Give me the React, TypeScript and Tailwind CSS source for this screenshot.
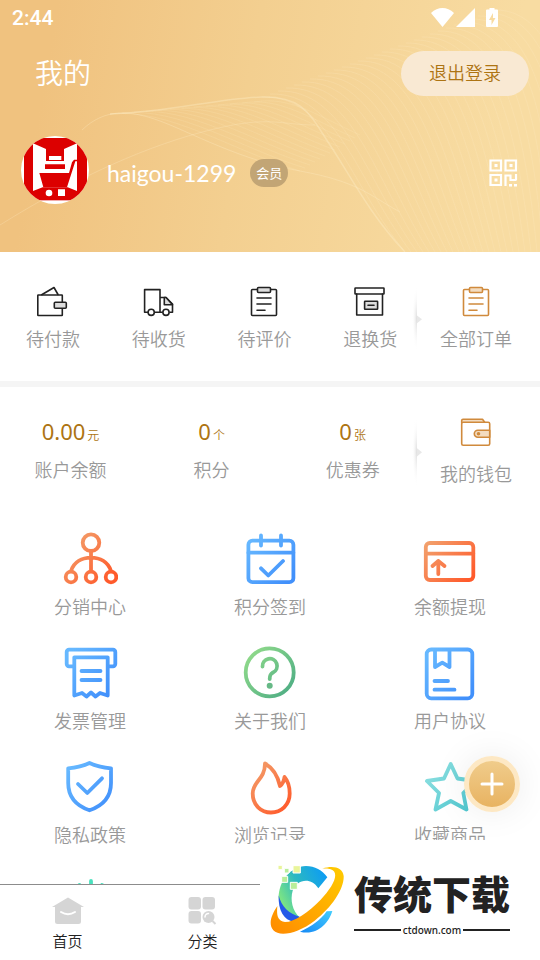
import type { ReactNode } from "react";

const CJK = "font-['Noto_Sans','Noto_Sans_CJK_SC',sans-serif]";

function fanPath(i: number) {
  return `M${262 + i * 8} ${97 - i * 3}C${330 + i * 8} ${95 - i * 3} ${350 + i * 8} ${185 - i * 2} ${405 + i * 6} 252`;
}

function meshPath(i: number) {
  return `M${110 + i * 12} ${114 - i}C${170 + i * 10} ${108 - i} ${230 + i * 7} ${150 - i * 3} ${300 + i * 5} ${171 - i * 3}`;
}

function HeaderWaves() {
  return (
    <svg
      className="absolute inset-0 h-full w-full"
      viewBox="0 0 540 252"
      preserveAspectRatio="none"
      fill="none"
      stroke="#fff0cc"
      aria-hidden="true"
    >
      <g strokeOpacity="0.18">
        {Array.from({ length: 30 }, (_, i) => (
          <path key={i} d={fanPath(i)} />
        ))}
      </g>
      <g strokeOpacity="0.15">
        {Array.from({ length: 13 }, (_, i) => (
          <path key={i} d={meshPath(i)} />
        ))}
      </g>
      <path d="M82 130C105 108 130 110 160 121S240 160 300 171S370 196 400 212" strokeOpacity="0.28" />
      <path d="M110 114C170 112 220 98 262 97S310 115 330 145S370 215 405 252" strokeOpacity="0.35" strokeWidth="1.500" />
      <path d="M0 225C80 175 150 145 210 130S280 125 315 125" strokeOpacity="0.25" />
    </svg>
  );
}

function StatusIcons() {
  return (
    <svg width="68" height="20" viewBox="0 0 68 20" fill="#fff" aria-hidden="true">
      <path d="M0 5C7-1.6 16-1.6 23 5L11.500 19Z" />
      <path d="M44 0V19H25Z" />
      <path
        fillRule="evenodd"
        d="M58.500 0h5v1.500H66a1 1 0 0 1 1 1V18a1 1 0 0 1-1 1H56a1 1 0 0 1-1-1V2.500a1 1 0 0 1 1-1h2.500ZM62 5l-4 7h2.500v5l4-7H62Z"
      />
    </svg>
  );
}

function Avatar() {
  return (
    <svg className="h-[68px] w-[68px] self-start rounded-full bg-white" viewBox="63 33 204 204" role="img" aria-label="头像">
      <rect x="72" y="39" width="189" height="187" fill="#dc0000" />
      <path fill="#fff" d="M99 55L138 72V108H192V72L231 55V198L203 187H128L99 198Z" />
      <path fill="#dc0000" d="M135 118H195V132H135ZM118 144H207L216 112L222 104H232V109H226L201 187L130 187Z" />
      <path fill="#fff" d="M147 93H184V105H147ZM174 193H195V213H174Z" />
      <circle cx="147" cy="204" r="10" fill="#fff" />
    </svg>
  );
}

function QrIcon() {
  return (
    <svg width="29" height="28" viewBox="0 0 29 28" fill="none" stroke="#fff" strokeWidth="2.200" aria-hidden="true">
      <path d="M1.500 1.500h10.500v10H1.500ZM16.500 1.500h10.500v10H16.500ZM1.500 16h10.500v10H1.500Z" />
      <path d="M16.500 27V16.500h5v4.500h6M27 15v6" />
      <path fill="#fff" stroke="none" d="M5.500 5h3v3h-3ZM20.500 5h3v3h-3ZM5.500 19.500h3v3h-3ZM20 25h3v2.500h-3ZM25 25h3v2.500h-3Z" />
    </svg>
  );
}

function LineIcon({ color = "#222", children }: { color?: string; children: ReactNode }) {
  return (
    <svg
      width="32"
      height="32"
      viewBox="0 0 32 32"
      fill="none"
      stroke={color}
      strokeWidth="1.600"
      strokeLinecap="round"
      strokeLinejoin="round"
      aria-hidden="true"
    >
      {children}
    </svg>
  );
}

function Clipboard({ color, tint }: { color: string; tint: string }) {
  return (
    <LineIcon color={color}>
      <rect x="3.500" y="3.500" width="25" height="26" rx="1" />
      <rect x="9.500" y="1.500" width="13" height="5" rx="1" fill={tint} />
      <path d="M9 12H23M9 18H23M9 24.300H17" />
    </LineIcon>
  );
}

const orders = [
  {
    label: "待付款",
    icon: (
      <LineIcon>
        <path d="M4.700 8.700L17 1.500L21 8.500" />
        <rect x="0.800" y="9" width="24.500" height="20.500" rx="0.500" />
        <rect x="17.300" y="16.300" width="12" height="6" rx="1" fill="#ddd" />
      </LineIcon>
    ),
  },
  {
    label: "待收货",
    icon: (
      <LineIcon>
        <path d="M5 26.300H1.600V3.600H17V26.300H12M17 11.500H23L29.500 18V26.300H27M17 26.300H20" />
        <path d="M21.300 11.500V18.800H29.500L23 11.500Z" fill="#ddd" />
        <circle cx="8.200" cy="26.300" r="3.100" fill="#fff" />
        <circle cx="23" cy="26.300" r="3.100" fill="#fff" />
      </LineIcon>
    ),
  },
  { label: "待评价", icon: <Clipboard color="#222" tint="#ddd" /> },
  {
    label: "退换货",
    icon: (
      <LineIcon>
        <path d="M2.700 8V29H28.500V8" />
        <rect x="1" y="2" width="29" height="6" rx="0.500" />
        <rect x="10.600" y="15.300" width="13" height="8" rx="0.500" fill="#ddd" />
        <path d="M14 19.300H20" />
      </LineIcon>
    ),
  },
];

const balances = [
  { label: "账户余额", value: "0.00", unit: "元" },
  { label: "积分", value: "0", unit: "个" },
  { label: "优惠券", value: "0", unit: "张" },
];

type Tone = "orange" | "blue" | "green" | "teal" | "mint";

const tones: Record<Tone, [string, string]> = {
  orange: ["#f2a06c", "#ff5a2b"],
  blue: ["#66b8ff", "#4190fb"],
  green: ["#8fd98a", "#4fae84"],
  teal: ["#8cdfe0", "#52c8d0"],
  mint: ["#4fe3c0", "#3fdcb8"],
};

const services: { label: string; tone: Tone; art: ReactNode }[] = [
  {
    label: "分销中心",
    tone: "orange",
    art: (
      <>
        <circle cx="29" cy="11.700" r="8.300" />
        <path d="M29 20V40M9 40C12 31 20 26.700 29 26.700S46 31 49 40" />
        <circle cx="9" cy="46" r="5.300" />
        <circle cx="29" cy="46" r="5.300" />
        <circle cx="49" cy="46" r="5.300" />
      </>
    ),
  },
  {
    label: "积分签到",
    tone: "blue",
    art: (
      <>
        <rect x="6.400" y="9.700" width="45" height="41.500" rx="4" />
        <path d="M6.400 21.700H51.400M19 4.500V14.500M39 4.500V14.500M19 37.300L26.300 44.500L41 30" />
      </>
    ),
  },
  {
    label: "余额提现",
    tone: "orange",
    art: (
      <>
        <rect x="3.800" y="12" width="47.500" height="37" rx="4" />
        <path d="M3.800 22.700H51.300M16.300 43V30M10.500 35L16.300 30L22.500 35" />
      </>
    ),
  },
  {
    label: "发票管理",
    tone: "blue",
    art: (
      <>
        <path d="M12 21.300H7A2.300 2.300 0 0 1 4.700 19V7A2.300 2.300 0 0 1 7 4.700H51A2.300 2.300 0 0 1 53.300 7V19A2.300 2.300 0 0 1 51 21.300H46" />
        <path d="M12.300 50.500V12.300H45.700V50.500L38 48L33.500 51.500L29 47.500L24.500 51.500L20 48Z" />
        <path d="M19.500 26H38.500M19.500 35H38.500" />
      </>
    ),
  },
  {
    label: "关于我们",
    tone: "green",
    art: (
      <>
        <circle cx="27.700" cy="27.400" r="24" />
        <path d="M20.500 21.500A7.300 7.300 0 1 1 31 27.500C28.500 29 27.700 30 27.700 34" />
        <circle cx="27.700" cy="40.700" r="3" fill="#66b986" stroke="none" />
      </>
    ),
  },
  {
    label: "用户协议",
    tone: "blue",
    art: (
      <>
        <rect x="4.700" y="4.500" width="45.600" height="48.800" rx="4.500" />
        <path d="M13 5V22L20.300 17.700L27.500 22V5M12.500 36H26M12.500 44.700H32.500" />
      </>
    ),
  },
  {
    label: "隐私政策",
    tone: "blue",
    art: (
      <>
        <path d="M27.500 4C21 7 14 8.500 6.200 9.300V24C6.200 39 15 47 27.500 51.300C40 47 49 39 49 24V9.300C41 8.500 34 7 27.500 4Z" />
        <path d="M16 25L25.300 34L40 19.300" />
      </>
    ),
  },
  {
    label: "浏览记录",
    tone: "orange",
    art: (
      <path d="M23 4.500C31 9 36 18 38 27C40 25.500 42 22 42.500 18C46 22 47.700 28 47.700 34.500C47.700 46 39 53.500 29 53.500S10.700 46 10.700 34.500C10.700 22 23 21 23 4.500Z" />
    ),
  },
  {
    label: "收藏商品",
    tone: "teal",
    art: (
      <path d="M28.700 5L35.500 19.500L53 22L41.300 34L44.500 50.500L28.700 42L13.500 50.500L17 34L4.900 22L22 19.500Z" />
    ),
  },
];

function ServiceIcon({ id, tone, children }: { id: string; tone: Tone; children: ReactNode }) {
  const [from, to] = tones[tone];
  return (
    <svg
      width="56"
      height="56"
      viewBox="0 0 56 56"
      fill="none"
      stroke={`url(#${id})`}
      strokeWidth="3.800"
      strokeLinecap="round"
      strokeLinejoin="round"
      aria-hidden="true"
    >
      <defs>
        <linearGradient id={id} gradientUnits="userSpaceOnUse" x1="6" y1="10" x2="48" y2="48">
          <stop stopColor={from} />
          <stop offset="1" stopColor={to} />
        </linearGradient>
      </defs>
      {children}
    </svg>
  );
}

function Divider() {
  return (
    <svg className="absolute -left-3 top-0 h-full w-3" viewBox="0 0 12 96" preserveAspectRatio="none" aria-hidden="true">
      <defs>
        <radialGradient id="edge" gradientUnits="userSpaceOnUse" cx="0" cy="0" r="1" gradientTransform="translate(6 48) scale(5 48)">
          <stop stopColor="#dcdcdc" />
          <stop offset="1" stopColor="#fff" stopOpacity="0" />
        </radialGradient>
      </defs>
      <rect width="6" height="96" fill="url(#edge)" />
      <path d="M6 43L11 48.500L6 54Z" fill="#e8e8e8" />
    </svg>
  );
}

function Watermark() {
  return (
    <aside className="absolute bottom-0 right-0 flex h-[120px] w-[280px] items-center gap-[9px] bg-white pl-[10px]">
      <svg width="75" height="70" viewBox="88 375 225 210" aria-hidden="true">
        <defs>
          <linearGradient id="ring" x1="0" y1="1" x2="1" y2="0">
            <stop stopColor="#ff8a00" />
            <stop offset="1" stopColor="#ffcb00" />
          </linearGradient>
          <linearGradient id="arc" x1="0" y1="0.700" x2="1" y2="0.200">
            <stop stopColor="#86ea7c" />
            <stop offset="0.450" stopColor="#2cb9c0" />
            <stop offset="1" stopColor="#0c9cf5" />
          </linearGradient>
          <linearGradient id="tail" x1="0" y1="1" x2="1" y2="0">
            <stop stopColor="#1689f5" />
            <stop offset="1" stopColor="#43cdfd" />
          </linearGradient>
        </defs>
        <path fill="url(#arc)" d="M260 412C245 390 222 378 196 378C150 380 114 422 114 474C116 505 142 530 177 532C155 512 148 480 156 452C166 422 208 407 233 445Z" />
        <path fill="#2459e8" d="M114 466C122 500 145 522 178 531L160 545C130 542 112 512 114 466Z" />
        <path fill="url(#tail)" d="M178 575C215 558 240 540 258 514L275 513C264 551 228 588 178 575Z" />
        <path
          fill="url(#ring)"
          d="M245 386C280 375 306 384 309 408C311 444 276 500 222 542C172 580 118 592 98 571C82 552 92 525 110 498C108 522 108 543 133 546C162 546 204 516 240 479C278 438 299 398 270 388C264 385 254 385 245 386Z"
        />
        <g stroke="#fff" strokeWidth="3">
          <path fill="#e9f59a" d="M112 376h13v13h-13ZM157 377h22v22h-22Z" />
          <path fill="#b9ee9a" d="M131 385h14v14h-14ZM123 409h18v18h-18ZM149 427h21v21h-21Z" />
        </g>
      </svg>
      <div className="w-[156px] text-center text-[#222]">
        <p className="whitespace-nowrap font-['Noto_Sans_CJK_SC',sans-serif] text-[39px] font-black leading-[60px]">传统下载</p>
        <p className="flex items-center gap-[2px] font-['Noto_Sans',sans-serif] text-[10px] font-medium leading-4">
          <span className="h-[2px] flex-1 bg-[#222]" />
          ctdown.com
          <span className="h-[2px] flex-1 bg-[#222]" />
        </p>
      </div>
    </aside>
  );
}

export default function App() {
  return (
    <div className={`relative flex h-screen flex-col overflow-hidden bg-white font-[350] ${CJK}`}>
      <main className="min-h-0 flex-1 overflow-y-auto [scrollbar-width:none]">
        <header className="relative bg-linear-[100deg,#f0c27f_10%,#f3cf90_45%,#f8dca2_90%] text-white">
          <HeaderWaves />
          <div className="relative">
            <div className="flex h-9 items-center justify-between pl-3 pr-[41px]">
              <span className="font-[Roboto,sans-serif] text-[21px] font-medium leading-10">2:44</span>
              <StatusIcons />
            </div>
            <div className="flex h-[74px] items-center justify-between pl-[35px] pr-[11px]">
              <h1 className="text-[28px] leading-9">我的</h1>
              <button className="h-[45px] w-32 rounded-full bg-[#f9e9d3] text-[18px] text-[#ad7413]">退出登录</button>
            </div>
            <div className="flex h-[142px] items-start pt-[26px]">
              <div className="flex h-[74px] w-full items-center pl-[21px] pr-[22px]">
                <Avatar />
                <span className="ml-[18px] font-[Lato,sans-serif] text-[23px] font-normal leading-8">haigou-1299</span>
                <span className="ml-[14px] rounded-full bg-[#c2a575] px-[6px] text-[13px] font-normal leading-7">会员</span>
                <button className="ml-auto" aria-label="二维码">
                  <QrIcon />
                </button>
              </div>
            </div>
          </div>
        </header>

        <nav className="grid grid-cols-5 border-b-[6px] border-[#f5f5f5] pb-[29px] pr-[11px] pt-[34px] text-[18px] leading-[26px] text-[#999]" aria-label="订单">
          {orders.map((o) => (
            <button key={o.label} className="flex flex-col items-center gap-2">
              {o.icon}
              {o.label}
            </button>
          ))}
          <button className="relative flex flex-col items-center gap-2">
            <Divider />
            <Clipboard color="#d08a3c" tint="#f3dcc0" />
            全部订单
          </button>
        </nav>

        <section className="grid grid-cols-5 pr-[11px] pt-[30px] text-[18px] leading-[26px] text-[#999]">
          <dl className="col-span-4 grid grid-cols-3 text-center">
            {balances.map((b) => (
              <div key={b.label} className="flex flex-col-reverse justify-end gap-[7px]">
                <dt>{b.label}</dt>
                <dd className="leading-7 text-[#ad7413]">
                  <span className="text-[22px] font-normal">{b.value}</span>
                  <span className="ml-[2px] text-[12px]">{b.unit}</span>
                </dd>
              </div>
            ))}
          </dl>
          <button className="relative flex flex-col items-center gap-3">
            <Divider />
            <LineIcon color="#d08a3c">
              <path d="M1.700 6V3.500Q1.700 2.300 3 2.300H22.500L24.500 5" fill="#f3dcc0" />
              <rect x="1.700" y="5.300" width="28" height="23" rx="1.500" fill="#fff" />
              <path d="M29.700 13.300H17.800A3.500 3.500 0 0 0 17.800 20.300H29.700Z" fill="#f3dcc0" />
              <circle cx="18.500" cy="16.800" r="1" fill="#d08a3c" />
            </LineIcon>
            我的钱包
          </button>
        </section>

        <nav className="grid grid-cols-3 gap-y-[25px] pt-11 text-[18px] leading-[26px] text-[#999]" aria-label="服务">
          {services.map((s, i) => (
            <button key={s.label} className="flex flex-col items-center gap-[7px]">
              <ServiceIcon id={`service-${i}`} tone={s.tone}>
                {s.art}
              </ServiceIcon>
              {s.label}
            </button>
          ))}
          <button className="flex flex-col items-center" aria-label="设置">
            <ServiceIcon id="service-more" tone="mint">
              <path d="M29 8V16M17.500 12L20 17M40 12L38 17" />
            </ServiceIcon>
          </button>
        </nav>
      </main>

      <nav className="grid h-[76px] grid-cols-4 border-t border-[#8c8c8c] bg-white pt-[10px] text-[15px] leading-5 text-[#222]" aria-label="主导航">
        <a href="#home" className="flex flex-col items-center gap-1">
          <svg width="32" height="32" viewBox="0 0 32 32" aria-hidden="true">
            <path fill="#d5d5d5" d="M16 2.500L32 12H29V26.500Q29 29 26.500 29H5.500Q3 29 3 26.500V12H0Z" />
            <path d="M9 17Q16 21.500 23 17" fill="none" stroke="#fff" strokeWidth="2" strokeLinecap="round" />
          </svg>
          首页
        </a>
        <a href="#category" className="flex flex-col items-center gap-1">
          <svg width="32" height="32" viewBox="0 0 32 32" fill="#d5d5d5" aria-hidden="true">
            <rect x="1.500" y="2" width="12.500" height="12.500" rx="3" />
            <rect x="15.500" y="2" width="12.500" height="12.500" rx="3" />
            <rect x="1.500" y="16" width="12.500" height="12.500" rx="3" />
            <circle cx="21.500" cy="22" r="6" />
            <path d="M25.500 26L28.500 29" stroke="#d5d5d5" strokeWidth="2" />
            <path d="M18 22A3.500 3.500 0 0 1 21.500 18.500" fill="none" stroke="#fff" strokeWidth="1.500" strokeLinecap="round" />
          </svg>
          分类
        </a>
      </nav>

      <button
        className="absolute bottom-[148px] right-5 flex h-14 w-14 items-center justify-center rounded-full border-[5px] border-[#fde8c4] bg-linear-to-b from-[#f0cc8b] to-[#e8b361] shadow-[0_0_36px_rgba(0,0,0,0.08)]"
        aria-label="添加"
      >
        <svg width="24" height="24" viewBox="0 0 24 24" stroke="#fff" strokeWidth="3" strokeLinecap="round" aria-hidden="true">
          <path d="M12 2V22M2 12H22" />
        </svg>
      </button>
      <Watermark />
    </div>
  );
}
